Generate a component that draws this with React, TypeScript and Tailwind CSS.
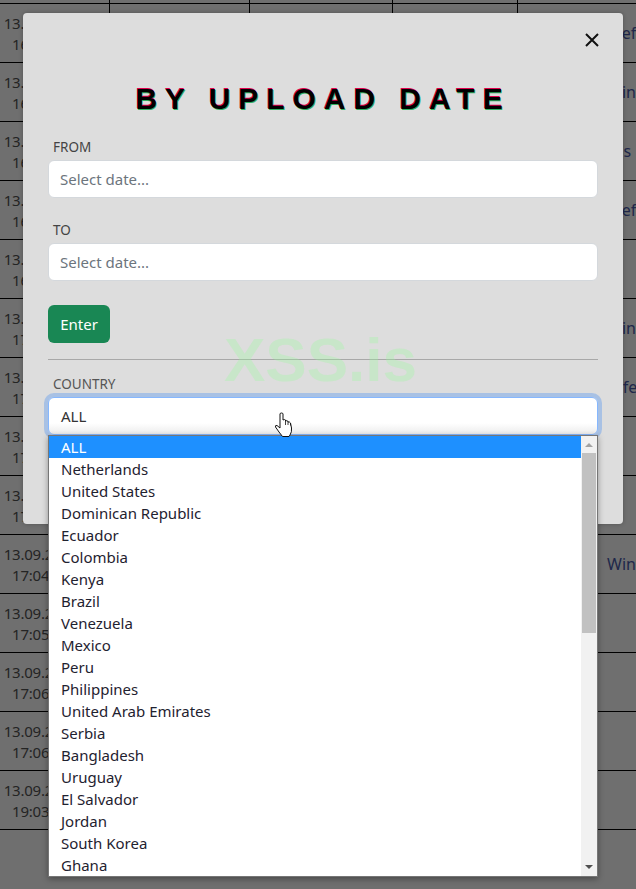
const rows = [
  { time: "16:58:12", tail: "Defender", pad: "pl-[92px]" },
  { time: "16:59:40", tail: "Windows", pad: "pl-[89px]" },
  { time: "16:59:58", tail: "Ms Defender", pad: "pl-[91px]" },
  { time: "16:59:59", tail: "Defender", pad: "pl-[92px]" },
  { time: "16:59:59", tail: "", pad: "pl-[89px]" },
  { time: "17:00:14", tail: "Windows", pad: "pl-[89px]" },
  { time: "17:01:22", tail: "Defender", pad: "pl-[84px]" },
  { time: "17:02:05", tail: "", pad: "pl-[89px]" },
  { time: "17:03:31", tail: "", pad: "pl-[89px]" },
  { time: "17:04:16", tail: "Windows", pad: "pl-[89px]" },
  { time: "17:05:47", tail: "", pad: "pl-[89px]" },
  { time: "17:06:02", tail: "", pad: "pl-[89px]" },
  { time: "17:06:39", tail: "", pad: "pl-[89px]" },
  { time: "19:03:28", tail: "", pad: "pl-[89px]" },
];

const countries = [
  "ALL", "Netherlands", "United States", "Dominican Republic", "Ecuador", "Colombia", "Kenya",
  "Brazil", "Venezuela", "Mexico", "Peru", "Philippines", "United Arab Emirates", "Serbia",
  "Bangladesh", "Uruguay", "El Salvador", "Jordan", "South Korea", "Ghana",
];

function Field({ label, first }: { label: string; first?: boolean }) {
  return (
    <div className={first ? "mt-[18px]" : "mt-[22px]"}>
      <div className="h-5 pl-[5px] text-[13.5px] leading-5 text-[#444444]">{label}</div>
      <div className="mt-[3px] flex h-[38px] items-center rounded-[6px] border border-[#d4d8dc] bg-white pl-[11px] text-[15px] text-[#6c757d]">
        Select date...
      </div>
    </div>
  );
}

export default function App() {
  return (
    <div className="relative h-[889px] w-[636px] overflow-hidden bg-[#6f6f6f] font-['Noto_Sans',sans-serif] text-[15px] text-[#22232a]">
      {/* dimmed table behind the dialog */}
      <div className="flex h-[3px]">
        <div className="w-[109px]" />
        <div className="w-[140px] border-l border-black" />
        <div className="w-[143px] border-l border-black" />
        <div className="w-[125px] border-l border-black" />
        <div className="flex-1 border-l border-black" />
      </div>
      <div className="border-b border-black" />
      {rows.map((r, i) => (
        <div key={i} className="flex h-[59px] border-b border-black">
          <div className="w-[109px]">
            <div className="w-[82px] pt-[9px] text-center text-[15px] leading-[21px] tracking-[-0.2px] text-[#242424]">
              13.09.2023 {r.time}
            </div>
          </div>
          <div className="w-[140px] border-l border-black" />
          <div className="w-[143px] border-l border-black" />
          <div className="w-[125px] border-l border-black" />
          <div className={`flex flex-1 items-center overflow-hidden whitespace-nowrap border-l border-black text-[16px] text-[#20274a] ${r.pad}`}>
            {r.tail}
          </div>
        </div>
      ))}

      {/* dialog */}
      <div className="absolute left-[23px] top-[13px] h-[511px] w-[600px] rounded-[4px] bg-[#dddddd] px-[25px] shadow-[0_0_4px_rgba(0,0,0,0.25)]">
        <div className="-mr-px flex justify-end pt-[20px]">
          <svg width="14" height="14" viewBox="0 0 14 14" className="block">
            <path d="M1 1 13 13M13 1 1 13" stroke="#111111" strokeWidth="2" fill="none" />
          </svg>
        </div>
        <h1 className="mt-[32px] h-10 text-center font-['Liberation_Sans',sans-serif] text-[30px] font-bold uppercase leading-10 tracking-[0.265em] text-black [text-shadow:-0.5px_-1px_0_#e0004d,0.7px_0.5px_0_#2fae5f]">
          By Upload Date
        </h1>
        <Field label="FROM" first />
        <Field label="TO" />
        <button className="mt-[24px] block h-[38px] w-[62px] rounded-[6px] bg-[#198754] text-center text-[15px] text-white">
          Enter
        </button>
        <div className="mt-[16px] h-px bg-[#a8a8a8]" />
        <div className="mt-[14px] h-5 pl-[5px] text-[13.5px] leading-5 text-[#555555]">COUNTRY</div>
        <div className="mt-[3px] flex h-[38px] items-center rounded-[6px] border border-[#86b7fe] bg-gradient-to-b from-white from-70% to-[#ececec] pl-[12px] text-[15px] text-[#333333] shadow-[0_0_0_4px_rgba(13,110,253,0.25)]">
          ALL
        </div>
      </div>

      {/* watermark */}
      <div className="pointer-events-none absolute left-[224px] top-[323px] font-['Liberation_Sans',sans-serif] text-[62px] font-bold leading-[74px] text-[#97fb9c]/30">
        XSS.is
      </div>

      {/* open select list */}
      <div className="absolute left-[48px] top-[435px] flex h-[442px] w-[550px] border border-[#767676] bg-white shadow-[0_2px_6px_rgba(0,0,0,0.35)]">
        <ul className="flex-1">
          {countries.map((c, i) => (
            <li
              key={c}
              className={
                i === 0
                  ? "h-[22px] bg-[#1e90ff] pl-[12px] text-[15px] leading-[22px] text-white"
                  : "h-[22px] pl-[12px] text-[15px] leading-[22px] text-[#1f2230]"
              }
            >
              {c}
            </li>
          ))}
        </ul>
        <div className="flex w-[16px] flex-col items-center bg-[#f1f1f1]">
          <svg width="8" height="4" viewBox="0 0 8 4" className="mt-[7px] block">
            <path d="M4 0 8 4H0Z" fill="#a3a3a3" />
          </svg>
          <div className="mt-[6px] h-[180px] w-[14px] bg-[#c1c1c1]" />
          <svg width="8" height="4" viewBox="0 0 8 4" className="mb-[7px] mt-auto block">
            <path d="M0 0H8L4 4Z" fill="#505050" />
          </svg>
        </div>
      </div>

      {/* mouse pointer */}
      <svg width="20" height="27" viewBox="0 0 20 27" className="absolute left-[274px] top-[412px]">
        <path
          d="M6 2Q6 1 7.5 1Q9 1 9 2V8Q10.5 7 11.5 8V9Q13 8 14 9.5V10Q15.5 9.5 16.5 11L17.5 16Q18 20 16 23L15 24.5H8.5L5 20L1.5 15Q1 13 3 13.5L6 16Z"
          fill="white"
          stroke="#111111"
          strokeWidth="1"
        />
        <path d="M11.5 8V13M14 9.5V13M16.5 11V13.5" stroke="#111111" strokeWidth="0.8" fill="none" />
      </svg>
    </div>
  );
}
